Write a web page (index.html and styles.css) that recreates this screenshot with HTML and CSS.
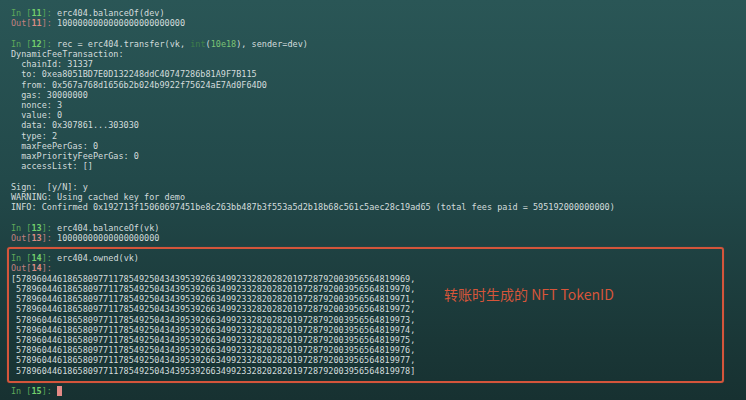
FILE: index.html
```html
<!DOCTYPE html>
<html>
<head>
<meta charset="utf-8">
<link rel="stylesheet" href="styles.css">
</head>
<body>
<div class="term">
<div class="ln"><span class="pin">In [<b>11</b>]:</span> erc404.balanceOf(dev)</div>
<div class="ln"><span class="pout">Out[<b>11</b>]:</span> 1000000000000000000000000</div>
<div class="ln"> </div>
<div class="ln"><span class="pin">In [<b>12</b>]:</span> rec = erc404.transfer(vk, <span class="bi">int</span>(<span class="num">10e18</span>), sender=dev)</div>
<div class="ln">DynamicFeeTransaction:</div>
<div class="ln">  chainId: 31337</div>
<div class="ln">  to: 0xea8051BD7E0D132248ddC40747286b81A9F7B115</div>
<div class="ln">  from: 0x567a768d1656b2b024b9922f75624aE7Ad0F64D0</div>
<div class="ln">  gas: 30000000</div>
<div class="ln">  nonce: 3</div>
<div class="ln">  value: 0</div>
<div class="ln">  data: 0x307861...303030</div>
<div class="ln">  type: 2</div>
<div class="ln">  maxFeePerGas: 0</div>
<div class="ln">  maxPriorityFeePerGas: 0</div>
<div class="ln">  accessList: []</div>
<div class="ln"> </div>
<div class="ln">Sign:  [y/N]: y</div>
<div class="ln">WARNING: Using cached key for demo</div>
<div class="ln">INFO: Confirmed 0x192713f15060697451be8c263bb487b3f553a5d2b18b68c561c5aec28c19ad65 (total fees paid = 595192000000000)</div>
<div class="ln"> </div>
<div class="ln"><span class="pin">In [<b>13</b>]:</span> erc404.balanceOf(vk)</div>
<div class="ln"><span class="pout">Out[<b>13</b>]:</span> 10000000000000000000</div>
<div class="ln"> </div>
<div class="hl">
<div class="ln"><span class="pin">In [<b>14</b>]:</span> erc404.owned(vk)</div>
<div class="ln"><span class="pout">Out[<b>14</b>]:</span></div>
<div class="ln">[57896044618658097711785492504343953926634992332820282019728792003956564819969,</div>
<div class="ln"> 57896044618658097711785492504343953926634992332820282019728792003956564819970,</div>
<div class="ln"> 57896044618658097711785492504343953926634992332820282019728792003956564819971,</div>
<div class="ln"> 57896044618658097711785492504343953926634992332820282019728792003956564819972,</div>
<div class="ln"> 57896044618658097711785492504343953926634992332820282019728792003956564819973,</div>
<div class="ln"> 57896044618658097711785492504343953926634992332820282019728792003956564819974,</div>
<div class="ln"> 57896044618658097711785492504343953926634992332820282019728792003956564819975,</div>
<div class="ln"> 57896044618658097711785492504343953926634992332820282019728792003956564819976,</div>
<div class="ln"> 57896044618658097711785492504343953926634992332820282019728792003956564819977,</div>
<div class="ln"> 57896044618658097711785492504343953926634992332820282019728792003956564819978]</div>
<div class="note">转账时生成的 NFT TokenID</div>
</div>
<div class="ln"> </div>
<div class="ln"><span class="pin">In [<b>15</b>]:</span> <span class="cursor"></span></div>
</div>
</body>
</html>
```

FILE: styles.css
```css
html, body {
  margin: 0;
  height: 100%;
}
body {
  background: linear-gradient(180deg, #2a5656 0%, #22494a 45%, #1a3737 85%, #173131 100%);
  overflow: hidden;
}
.term {
  padding: 8px 0 0 11px;
  font-family: "DejaVu Sans Mono", monospace;
  font-size: 8.5px;
  line-height: 10.22px;
  color: #d3dcdc;
}
.ln {
  white-space: pre;
  height: 10.22px;
}
.pin {
  color: #5ea85a;
}
.pin b {
  color: #73cf6c;
  font-weight: bold;
}
.pout {
  color: #c08080;
}
.pout b {
  color: #d98c84;
  font-weight: bold;
}
.bi {
  color: #3f7f4a;
}
.num {
  color: #7cc275;
}
.hl {
  position: relative;
  width: 709px;
  margin: -6px 0 -7px -4px;
  padding: 4px 2px 5px 2px;
  border: 2px solid #d4553b;
  border-radius: 3px;
  box-shadow: 0 0 1px rgba(212, 85, 59, 0.6);
}
.note {
  position: absolute;
  left: 435px;
  top: 37px;
  font-family: "Noto Sans CJK SC", "Noto Sans", sans-serif;
  font-size: 14px;
  line-height: 17px;
  color: #d6553a;
  white-space: nowrap;
}
.cursor {
  display: inline-block;
  width: 5px;
  height: 10px;
  vertical-align: -2px;
  background: #e48a86;
}
```
